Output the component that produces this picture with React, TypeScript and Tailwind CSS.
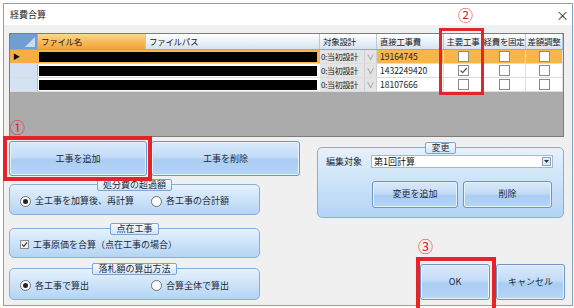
import React from "react";

const font = { fontFamily: '"Noto Sans CJK JP", "Noto Sans", sans-serif' };

const cols = [28, 108, 174, 57, 67, 39, 43, 37];

function Check({ checked }: { checked?: boolean }) {
  return (
    <span className="flex h-[11px] w-[11px] items-center justify-center border border-[#8a8a8a] bg-white">
      {checked && (
        <svg width="9" height="9" viewBox="0 0 9 9">
          <path d="M1.5 4.5 L3.7 6.7 L7.8 2" fill="none" stroke="#555" strokeWidth="1.2" />
        </svg>
      )}
    </span>
  );
}

function Radio({ on }: { on?: boolean }) {
  return (
    <span className="flex h-[11px] w-[11px] items-center justify-center rounded-full border border-[#6f6f6f] bg-white">
      {on && <span className="h-[5px] w-[5px] rounded-full bg-[#222]" />}
    </span>
  );
}

function Btn({ label, className }: { label: string; className: string }) {
  return (
    <div
      className={`flex items-center justify-center rounded-[3px] border border-[#6f95c2] bg-[linear-gradient(#d9e9fb,#c4dcf7_45%,#a9cdf3_55%,#b6d5f6)] text-[9px] text-[#1c2a3a] shadow-[inset_0_0_0_1px_#e8f2fd] ${className}`}
    >
      {label}
    </div>
  );
}

function Group({ title, className, children }: { title: string; className: string; children: React.ReactNode }) {
  return (
    <div
      className={`relative rounded-[5px] border border-[#86aed8] bg-[linear-gradient(#e6f1fc,#cde3f9_50%,#b4d4f5)] ${className}`}
    >
      <div className="absolute -top-[6px] left-0 right-0 flex justify-center">
        <span className="rounded-[2px] border border-[#7ea4cf] bg-[linear-gradient(#f4f9fe,#d3e6fa)] px-[5px] text-[9px] leading-[10px] text-[#1c2a3a]">
          {title}
        </span>
      </div>
      {children}
    </div>
  );
}

function Row({ active, amount, checked }: { active?: boolean; amount: string; checked?: boolean }) {
  const bg = active ? "bg-[#f7b54c]" : "bg-white";
  return (
    <div className={`flex h-[14px] border-b border-[#dcdcdc] ${bg}`}>
      <div
        className={`flex items-center border-r border-[#a7b9ce] pl-[3px] ${active ? "bg-[#f5ae45]" : "bg-[#d3e3f4]"}`}
        style={{ width: cols[0] }}
      >
        {active && <span className="text-[7px] leading-none text-black">▶</span>}
      </div>
      <div className="flex items-center pl-[1px]" style={{ width: cols[1] + cols[2] }}>
        <div className="h-[10px] w-[278px] bg-black" />
      </div>
      <div className="flex overflow-hidden border-r border-[#cfcfcf] bg-[#e4e4e4]" style={{ width: cols[3] }}>
        <span className="flex-1 overflow-hidden whitespace-nowrap pl-[1px] text-[8px] leading-[13px] tracking-[-0.3px] text-[#222]">
          0:当初設計
        </span>
        <span className="w-[12px] shrink-0 border-l border-[#cfcfcf] text-center text-[8px] leading-[13px] text-[#888]">∨</span>
      </div>
      <div className="whitespace-nowrap border-r border-[#e0e0e0] pl-[3px] text-[8.5px] leading-[13px] text-[#222]" style={{ width: cols[4] }}>
        {amount}
      </div>
      {[5, 6, 7].map((c) => (
        <div key={c} className="flex items-center justify-center border-r border-[#e0e0e0]" style={{ width: cols[c] }}>
          <Check checked={checked && c === 5} />
        </div>
      ))}
    </div>
  );
}

export default function App() {
  const heads = ["ファイル名", "ファイルパス", "対象設計", "直接工事費", "主要工事", "経費を固定", "差額調整"];
  return (
    <div className="relative h-[308px] w-[574px] overflow-hidden bg-white" style={font}>
      <div className="absolute left-[3px] top-[3px] flex h-[303px] w-[570px] flex-col border border-[#79a7d3]">
        {/* title bar */}
        <div className="flex h-[21px] items-center justify-between bg-white pl-[6px] pr-[3px]">
          <span className="text-[9px] text-[#222]">経費合算</span>
          <span className="text-[13px] leading-none text-[#333]">×</span>
        </div>
        {/* client */}
        <div className="flex flex-1 flex-col bg-[#f0f0f0] px-[5px] pt-[8px]">
          {/* grid */}
          <div className="flex h-[104px] w-[555px] flex-col border border-[#7c7c7c] bg-[#ababab]">
            <div className="flex h-[16px] border-b border-[#9aa9ba]">
              <div className="relative border-r border-[#9ab0c8] bg-[#6f9fd2]" style={{ width: cols[0] }}>
                <svg className="absolute bottom-[2px] right-[2px]" width="10" height="10" viewBox="0 0 10 10">
                  <path d="M10 0 L10 10 L0 10 Z" fill="#c9ddf2" />
                </svg>
              </div>
              {heads.map((h, i) => (
                <div
                  key={h}
                  className={`flex items-center overflow-hidden whitespace-nowrap border-r border-[#b9c8d9] text-[8.5px] tracking-[-0.3px] text-[#222] ${
                    i === 0
                      ? "bg-[linear-gradient(#fcd796,#f6b653_60%,#f2a53c)] pl-[3px]"
                      : i >= 4
                        ? "justify-center bg-[linear-gradient(#ffffff,#e9f0f8_55%,#d5e2f0)]"
                        : "bg-[linear-gradient(#ffffff,#e9f0f8_55%,#d5e2f0)] pl-[3px]"
                  }`}
                  style={{ width: cols[i + 1] }}
                >
                  {h}
                </div>
              ))}
            </div>
            <div className="bg-white">
              <Row active amount="19164745" />
              <Row amount="1432249420" checked />
              <Row amount="18107666" />
            </div>
          </div>

          {/* lower area */}
          <div className="flex">
            <div className="flex w-[292px] flex-col">
              <div className="mt-[4px] flex gap-[4px]">
                <Btn label="工事を追加" className="h-[35px] w-[138px]" />
                <Btn label="工事を削除" className="h-[35px] w-[149px]" />
              </div>
              <Group title="処分費の超過額" className="mt-[8px] h-[31px] w-[251px]">
                <div className="flex h-full items-center pl-[10px] pt-[3px] text-[9px] text-[#1c2a3a]">
                  <span className="flex w-[131px] items-center gap-[4px]">
                    <Radio on />
                    全工事を加算後、再計算
                  </span>
                  <span className="flex items-center gap-[4px]">
                    <Radio />
                    各工事の合計額
                  </span>
                </div>
              </Group>
              <Group title="点在工事" className="mt-[13px] h-[30px] w-[251px]">
                <div className="flex h-full items-center gap-[4px] pl-[10px] pt-[3px] text-[9px] text-[#1c2a3a]">
                  <span className="flex h-[9px] w-[9px] items-center justify-center border border-[#8a8a8a] bg-[#f4f4f4]">
                    <svg width="7" height="7" viewBox="0 0 7 7">
                      <path d="M1 3.5 L2.8 5.3 L6 1.5" fill="none" stroke="#444" strokeWidth="1.2" />
                    </svg>
                  </span>
                  工事原価を合算（点在工事の場合）
                </div>
              </Group>
              <Group title="落札額の算出方法" className="mt-[10px] h-[32px] w-[251px]">
                <div className="flex h-full items-center pl-[10px] pt-[3px] text-[9px] text-[#1c2a3a]">
                  <span className="flex w-[131px] items-center gap-[4px]">
                    <Radio on />
                    各工事で算出
                  </span>
                  <span className="flex items-center gap-[4px]">
                    <Radio />
                    合算全体で算出
                  </span>
                </div>
              </Group>
            </div>

            <div className="ml-[16px] flex flex-1 flex-col">
              <Group title="変更" className="mt-[10px] h-[71px] w-[247px]">
                <div className="flex items-center pl-[8px] pt-[7px]">
                  <span className="w-[45px] text-[9px] text-[#1c2a3a]">編集対象</span>
                  <div className="flex h-[13px] w-[182px] items-center justify-between border border-[#a9b8c8] bg-white pl-[2px] pr-[1px]">
                    <span className="text-[9px] leading-none text-[#111]">第1回計算</span>
                    <span className="flex h-[9px] w-[9px] items-center justify-center border border-[#8da5c0] bg-[#dde9f6]">
                      <svg width="5" height="3" viewBox="0 0 5 3">
                        <path d="M0 0 L5 0 L2.5 3 Z" fill="#333" />
                      </svg>
                    </span>
                  </div>
                </div>
                <div className="ml-[54px] mt-[12px] flex gap-[5px]">
                  <Btn label="変更を追加" className="h-[27px] w-[86px]" />
                  <Btn label="削除" className="h-[27px] w-[89px]" />
                </div>
              </Group>
              <div className="ml-[103px] mt-[46px] flex gap-[6px]">
                <Btn label="OK" className="h-[36px] w-[70px]" />
                <Btn label="キャンセル" className="h-[36px] w-[69px]" />
              </div>
            </div>
          </div>
        </div>
      </div>

      {/* annotations */}
      <div className="absolute left-[439px] top-[28px] h-[67px] w-[45px] border-[3px] border-[#e3242b]" />
      <div className="absolute left-[3px] top-[136px] h-[45px] w-[149px] border-[4px] border-[#e3242b]" />
      <div className="absolute left-[416px] top-[257px] h-[55px] w-[80px] border-[4px] border-[#e3242b]" />
      <span className="absolute left-[458px] top-[7px] text-[15px] leading-none text-[#e3242b]">②</span>
      <span className="absolute left-[10px] top-[119px] text-[15px] leading-none text-[#e3242b]">①</span>
      <span className="absolute left-[418px] top-[238px] text-[15px] leading-none text-[#e3242b]">③</span>
    </div>
  );
}
